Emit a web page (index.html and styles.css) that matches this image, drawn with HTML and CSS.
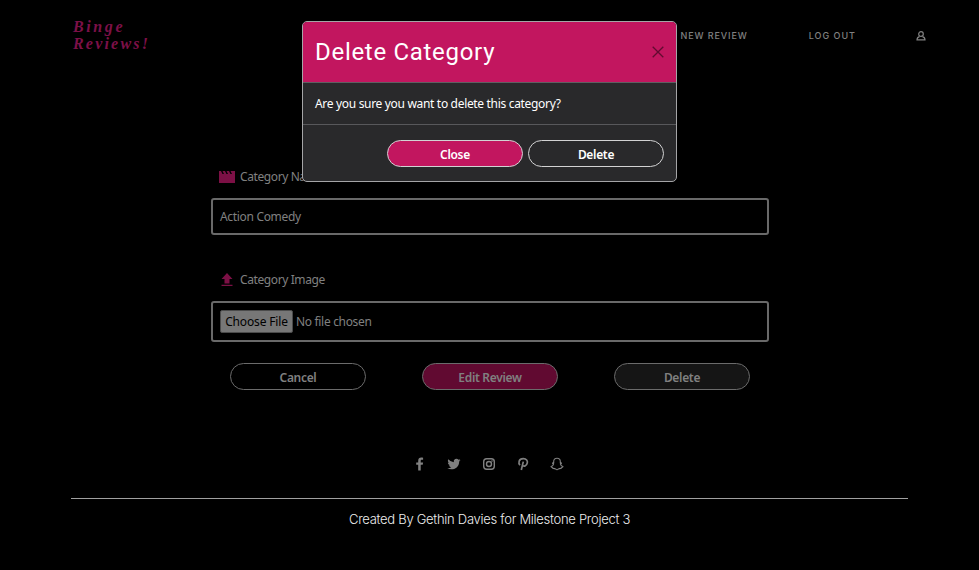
FILE: index.html
```html
<!DOCTYPE html>
<html lang="en">
<head>
<meta charset="utf-8">
<title>Binge Reviews!</title>
<link rel="stylesheet" href="styles.css">
</head>
<body>
<header class="navbar">
  <a class="logo"><span class="logo-top">Binge</span><span class="logo-bottom">Reviews!</span></a>
  <nav class="nav">
    <a class="nav-new">NEW REVIEW</a>
    <a class="nav-out">LOG OUT</a>
    <svg class="user" viewBox="0 0 10 10"><g fill="none" stroke="currentColor" stroke-width="1.2"><circle cx="5" cy="3" r="2.3"/><path d="M3.500 5.600C1.800 6 1 7 1 9h8C9 7 8.200 6 6.500 5.600M1 8.800h8"/></g></svg>
  </nav>
</header>
<main class="form">
  <label class="label"><svg class="icon" viewBox="0 0 16 14"><path fill="currentColor" d="M0 1h2l1.500 3H5L3.500 1H6l1.500 3H9L7.500 1H10l1.500 3H13l-1.500-3H16v12H0z"/></svg><span class="label-text">Category Name</span></label>
  <div class="field"><span class="value">Action Comedy</span></div>
  <label class="label label-image"><svg class="icon" viewBox="0 0 16 14"><path fill="currentColor" d="M8 0l5.500 6h-3V10.500h-5V6h-3zM2.500 11.800h11v1.200h-11z"/></svg><span class="label-text">Category Image</span></label>
  <div class="field file"><button class="choose"><span>Choose File</span></button><span class="no-file">No file chosen</span></div>
  <div class="actions">
    <button class="btn"><span>Cancel</span></button>
    <button class="btn pink"><span>Edit Review</span></button>
    <button class="btn dark"><span>Delete</span></button>
  </div>
</main>
<footer class="footer">
  <div class="social">
    <svg viewBox="0 0 14 14"><path fill="currentColor" d="M5.200 13.500V7.700H3.200V5.400h2V3.700C5.200 1.700 6.400.6 8.200.6c.9 0 1.700.1 1.900.2v2H8.900c-1 0-1.200.5-1.200 1.200v1.400h2.400l-.4 2.300h-2v5.800z"/></svg>
    <svg viewBox="0 0 14 14"><path fill="currentColor" d="M13.500 3c-.4.200-.9.400-1.400.5.500-.4.900-.8 1.100-1.400-.5.300-1 .5-1.700.7A2.700 2.700 0 0 0 6.800 5.200 7.500 7.500 0 0 1 1.300 2.300C.5 3.800 1 5.100 2.100 5.900c-.4 0-.8-.1-1.200-.3 0 1.400.9 2.400 2.100 2.700-.4.100-.8.100-1.200 0 .4 1.100 1.300 1.800 2.500 1.900A5.500 5.500 0 0 1 .3 11.300c4.500 2.700 11.900.2 11.900-6.900.5-.4 1-.9 1.300-1.400z"/></svg>
    <svg viewBox="0 0 14 14"><g fill="none" stroke="currentColor" stroke-width="1.400"><rect x="1.700" y="1.700" width="10.600" height="10.600" rx="3"/><circle cx="7" cy="7" r="2.500"/></g><circle cx="10" cy="4" r=".8" fill="currentColor"/></svg>
    <svg viewBox="0 0 14 14"><path fill="none" stroke="currentColor" stroke-width="1.700" d="M4 8.100C2.300 6.500 2.300 1.600 7.300 1.600c3.100 0 4.500 2.100 4 4.300-.6 3.300-3.700 3.900-4.700 2.200M7.300 4.600 5.300 13"/></svg>
    <svg viewBox="0 0 14 14"><path fill="none" stroke="currentColor" stroke-width="1.100" stroke-linejoin="round" d="M7 1.200c2.200 0 3.300 1.500 3.300 3.200v1.700l1-.2c.5.500-.2 1-.9 1.300.4 1.300 1.200 1.900 2.700 2.500-.2.600-.8.800-1.600.9l-.3.800c-1.800-.2-2.300.3-4.200 1.400-1.900-1.100-2.400-1.600-4.200-1.400l-.3-.8c-.8-.1-1.400-.3-1.600-.9 1.500-.6 2.300-1.200 2.700-2.500-.7-.3-1.400-.8-.9-1.300l1 .2V4.400c0-1.700 1.100-3.200 3.300-3.200z"/></svg>
  </div>
  <div class="rule"></div>
  <p class="credit"><span>Created By Gethin Davies for Milestone Project 3</span></p>
</footer>
<section class="modal" role="dialog">
  <div class="modal-head"><h5>Delete Category</h5><svg class="close" viewBox="0 0 12 12"><path d="M.7.7l10.600 10.600M11.300.7.7 11.300" stroke="currentColor" stroke-width="1.300"/></svg></div>
  <div class="modal-body"><span>Are you sure you want to delete this category?</span></div>
  <div class="modal-foot">
    <button class="btn bright-pink"><span>Close</span></button>
    <button class="btn bright"><span>Delete</span></button>
  </div>
</section>
</body>
</html>
```
FILE: styles.css
```css
* { box-sizing: border-box; }
body { margin: 0; height: 570px; overflow: hidden; background: #000; color: #808080; font: 12px/18px "Noto Sans", sans-serif; letter-spacing: -.32px; }
button { font: inherit; color: inherit; letter-spacing: inherit; padding: 0; }
span { white-space: nowrap; }
.navbar { height: 72px; padding: 0 53px 0 73px; display: flex; justify-content: space-between; }
.logo { display: flex; flex-direction: column; padding-top: 18px; font: italic bold 16px/17px "Liberation Serif", serif; color: #7c1048; }
.logo-top { letter-spacing: 2.600px; }
.logo-bottom { letter-spacing: 2.200px; }
.nav { display: flex; align-items: center; font: 500 9px/12px Inter, sans-serif; letter-spacing: 1px; }
.nav-new { letter-spacing: .9px; }
.nav-out { margin-left: 61px; }
.user { width: 10px; height: 10px; margin-left: 60px; }
.form { width: 558px; margin: 95px 0 0 211px; }
.label { display: flex; align-items: center; height: 20px; padding-left: 8px; }
.label-text { letter-spacing: -.4px; }
.icon { width: 16px; height: 14px; margin-right: 5px; color: #7c1045; }
.field { display: flex; align-items: center; height: 37px; margin-top: 11px; padding-left: 7px; border: 2px solid #696969; border-radius: 3px; }
.label-image { margin-top: 35px; }
.file { height: 41px; }
.choose { width: 73px; height: 23px; background: #777; border: 1px solid #4b4b4b; border-radius: 2px; color: #000; margin-right: 3px; letter-spacing: -.15px; }
.actions { display: flex; justify-content: space-between; padding: 0 19px; margin-top: 21px; }
.btn { width: 136px; height: 27px; border: 1px solid #6b6b6b; border-radius: 14px; background: #000; font-weight: 600; padding-top: 3px; line-height: 18px; }
.pink { background: #610a31; }
.dark { background: #151515; }
.footer { margin-top: 67px; }
.social { display: flex; justify-content: center; gap: 20.300px; height: 14px; padding-right: 2px; }
.social svg { width: 14px; height: 14px; }
.rule { margin: 27px 71px 0 71px; height: 1px; background: #a0a0a0; }
.credit { margin: 10px 0 0; text-align: center; font: 300 13px/20px Inter, sans-serif; color: #eee; letter-spacing: -.28px; }
.modal { position: absolute; left: 302px; top: 21px; width: 375px; height: 161px; border: 1px solid #a5a5a7; border-radius: 5px; background: #29292b; color: #fff; overflow: hidden; }
.modal-head { height: 61px; padding: 0 12px; display: flex; align-items: center; justify-content: space-between; background: #c2165f; border-bottom: 1px solid #5f5f62; }
.modal-head h5 { margin: 0; font: 24px/32px Roboto, sans-serif; letter-spacing: .7px; }
.close { width: 12px; height: 12px; color: #610b30; }
.modal-body { height: 42px; padding: 0 12px; display: flex; align-items: center; border-bottom: 1px solid #58585b; }
.modal-foot { height: 56px; padding: 0 12px; display: flex; align-items: center; justify-content: flex-end; gap: 5px; }
.bright, .bright-pink { border-color: #d2d2d3; background: #29292b; }
.bright-pink { background: #c2165f; }
```
